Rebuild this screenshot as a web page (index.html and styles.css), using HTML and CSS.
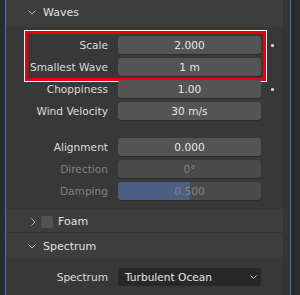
FILE: index.html
```html
<!DOCTYPE html>
<html>
<head>
<meta charset="utf-8">
<link rel="stylesheet" href="styles.css">
</head>
<body>
<div class="editor">
  <div class="panels">
    <div class="hdr hdr-top">
      <svg class="chev" width="8" height="5" viewBox="0 0 8 5"><polyline points="0.5,0.5 4,4 7.5,0.5" fill="none" stroke="#b8b8b8" stroke-width="1"/></svg>
      <span>Waves</span>
    </div>
    <div class="content">
      <div class="group">
        <div class="row"><div class="lbl">Scale</div><div class="fld">2.000</div><div class="dot"></div></div>
        <div class="row"><div class="lbl">Smallest Wave</div><div class="fld">1 m</div><div class="nodot"></div></div>
        <div class="frame"></div>
      </div>
      <div class="row"><div class="lbl">Choppiness</div><div class="fld">1.00</div><div class="dot"></div></div>
      <div class="row"><div class="lbl">Wind Velocity</div><div class="fld">30 m/s</div><div class="nodot"></div></div>
      <div class="row sep"><div class="lbl">Alignment</div><div class="fld">0.000</div><div class="nodot"></div></div>
      <div class="row off"><div class="lbl">Direction</div><div class="fld">0°</div><div class="nodot"></div></div>
      <div class="row off"><div class="lbl">Damping</div><div class="fld slider"><div class="fill" style="width:50%"></div><span>0.500</span></div><div class="nodot"></div></div>
    </div>
    <div class="hdr hdr-foam">
      <svg class="chev2" width="5" height="8" viewBox="0 0 5 8"><polyline points="0.5,0.5 4,4 0.5,7.5" fill="none" stroke="#b8b8b8" stroke-width="1"/></svg>
      <div class="check"></div>
      <span>Foam</span>
    </div>
    <div class="hdr hdr-spec">
      <svg class="chev" width="8" height="5" viewBox="0 0 8 5"><polyline points="0.5,0.5 4,4 7.5,0.5" fill="none" stroke="#b8b8b8" stroke-width="1"/></svg>
      <span>Spectrum</span>
    </div>
    <div class="content content-spec">
      <div class="row"><div class="lbl">Spectrum</div><div class="menu"><span>Turbulent Ocean</span><svg width="7" height="4" viewBox="0 0 7 4"><polyline points="0.5,0.5 3.5,3.5 6.5,0.5" fill="none" stroke="#c8c8c8" stroke-width="1"/></svg></div><div class="nodot"></div></div>
    </div>
  </div>
  <div class="strip"></div>
</div>
</body>
</html>
```

FILE: styles.css
```css
html, body {
  margin: 0;
  padding: 0;
}
body {
  width: 300px;
  height: 295px;
  overflow: hidden;
  background: #2b2b2b;
  font-family: "DejaVu Sans", sans-serif;
  font-size: 10.6px;
  color: #dedede;
}
.editor {
  margin-left: 5px;
  width: 284px;
  height: 295px;
  display: flex;
  border-left: 1px solid #4a74b6;
  border-right: 1px solid #4a74b6;
}
.panels {
  flex: 1;
  display: flex;
  flex-direction: column;
  background: #383838;
}
.strip {
  width: 7px;
  background: #353535;
}
.hdr {
  display: flex;
  align-items: center;
  background: #3d3d3d;
  font-size: 11px;
  color: #e0e0e0;
}
.hdr-top {
  height: 28px;
  padding-left: 22px;
  padding-bottom: 2px;
  box-sizing: border-box;
}
.hdr-foam {
  height: 24px;
  padding-left: 25px;
  padding-top: 3px;
  box-sizing: border-box;
  border-bottom: 1px solid #353535;
}
.hdr-spec {
  height: 26px;
  padding-left: 22px;
  padding-top: 3px;
  box-sizing: border-box;
}
.chev {
  margin-right: 7px;
}
.chev2 {
  margin-right: 5px;
}
.check {
  width: 12px;
  height: 12px;
  border-radius: 2px;
  background: #535353;
  margin-right: 5px;
}
.content {
  padding: 9px 0 9px 0;
  display: flex;
  flex-direction: column;
  gap: 4px;
}
.content-spec {
  padding-top: 10px;
}
.group {
  position: relative;
  display: flex;
  flex-direction: column;
  gap: 4px;
}
.frame {
  position: absolute;
  left: 19px;
  top: -5px;
  width: 241px;
  height: 50px;
  box-sizing: border-box;
  border: 3px solid #e8000b;
  outline: 1.5px solid #ffffff;
  pointer-events: none;
}
.row {
  display: flex;
  align-items: center;
  height: 18px;
}
.row.sep {
  margin-top: 14px;
}
.lbl {
  width: 102px;
  text-align: right;
  margin-right: 10px;
  white-space: nowrap;
}
.fld {
  position: relative;
  width: 143px;
  height: 18px;
  line-height: 18px;
  border-radius: 3px;
  background: #545454;
  text-align: center;
  color: #e6e6e6;
  box-shadow: 0 1px 0 #2e2e2e;
  overflow: hidden;
}
.off .lbl,
.off .fld {
  color: #828282;
}
.off .fld {
  background: #4a4a4a;
}
.slider .fill {
  position: absolute;
  left: 0;
  top: 0;
  bottom: 0;
  background: #4b5f84;
}
.slider span {
  position: relative;
}
.dot {
  width: 3px;
  height: 3px;
  border-radius: 1px;
  background: #cfcfcf;
  margin-left: 10px;
}
.menu {
  width: 143px;
  height: 18px;
  border-radius: 3px;
  background: #282828;
  display: flex;
  align-items: center;
  justify-content: space-between;
  padding: 0 4px 0 7px;
  box-sizing: border-box;
  color: #e6e6e6;
}
```
